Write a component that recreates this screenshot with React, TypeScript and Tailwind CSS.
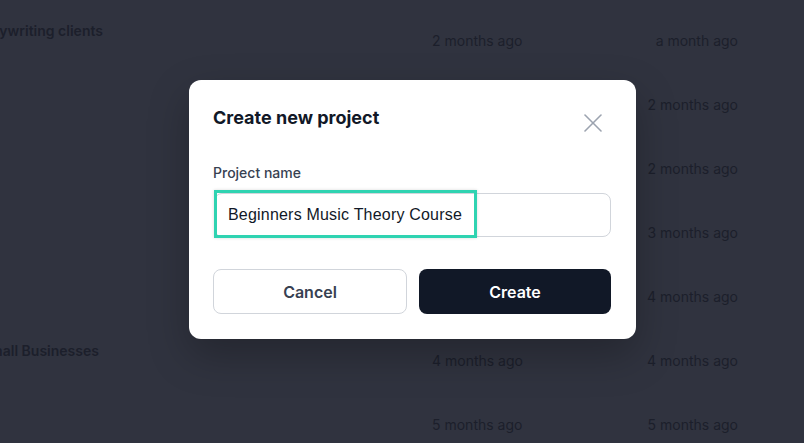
import React from "react";

const rows: { title?: string; offset?: string; d1: string; d2: string }[] = [
  { title: "Copywriting clients", offset: "-ml-[28px]", d1: "2 months ago", d2: "a month ago" },
  { d1: "2 months ago", d2: "2 months ago" },
  { d1: "2 months ago", d2: "2 months ago" },
  { d1: "3 months ago", d2: "3 months ago" },
  { d1: "4 months ago", d2: "4 months ago" },
  { title: "Small Businesses", offset: "-ml-[19px]", d1: "4 months ago", d2: "4 months ago" },
  { d1: "5 months ago", d2: "5 months ago" },
];

export default function App() {
  return (
    <div
      className="relative w-full h-[443px] overflow-hidden bg-[#30333f] text-[#1c1f2b]"
      style={{ fontFamily: "Inter, 'Noto Sans', sans-serif" }}
    >
      <div className="flex flex-col pt-[9px]">
        {rows.map((r, i) => (
          <div key={i} className="flex h-16 items-center text-sm">
            <div className="w-[432px] shrink-0 overflow-hidden">
              <div className={`mb-5 font-semibold whitespace-nowrap ${r.offset ?? ""}`}>
                {r.title ?? "\u00a0"}
              </div>
            </div>
            <div className="w-[150px] shrink-0">{r.d1}</div>
            <div className="flex-1 pr-[66px] text-right">{r.d2}</div>
          </div>
        ))}
      </div>

      <div className="absolute inset-0 pl-[189px] pt-[80px]">
        <div className="w-[447px] rounded-xl bg-white pl-6 pr-[25px] pt-6 pb-[25px] shadow-[0_16px_40px_rgba(0,0,0,0.25)]">
          <div className="flex items-start justify-between">
            <h2 className="text-lg leading-7 font-bold text-[#111827]">Create new project</h2>
            <button className="mt-[10px] mr-[9px] h-[18px] w-[18px] text-[#9ca3af]">
              <svg viewBox="0 0 18 18" width="18" height="18" fill="none" stroke="currentColor" strokeWidth="1.6" strokeLinecap="round">
                <line x1="1" y1="1" x2="17" y2="17" />
                <line x1="17" y1="1" x2="1" y2="17" />
              </svg>
            </button>
          </div>
          <label className="mt-[31px] block text-sm leading-5 font-medium text-[#374151]">Project name</label>
          <div className="relative mt-[10px] ml-px">
            <div
              className="flex h-[44px] items-center rounded-lg border border-[#d1d5db] pl-[13px] text-base tracking-[0.2px] text-[#111827]"
              style={{ fontFamily: "'Liberation Sans', Arial, sans-serif" }}
            >
              Beginners Music Theory Course
            </div>
            <div className="absolute left-0 -top-[3px] h-[48px] w-[263px] border-[3px] border-[#2fd3b1] shadow-[0_0_3px_rgba(0,0,0,0.15)]" />
          </div>
          <div className="mt-8 flex gap-3">
            <button className="h-[45px] flex-1 rounded-lg border border-[#d1d5db] bg-white text-base font-semibold text-[#374151]">
              Cancel
            </button>
            <button className="h-[45px] flex-1 rounded-lg bg-[#111827] text-base font-semibold text-white">
              Create
            </button>
          </div>
        </div>
      </div>
    </div>
  );
}
